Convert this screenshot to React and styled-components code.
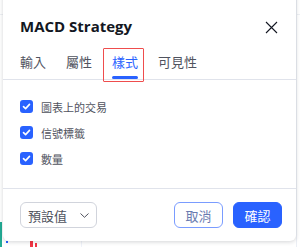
import React from "react";
import styled, { createGlobalStyle } from "styled-components";

const Global = createGlobalStyle`
  html, body { margin: 0; padding: 0; background: #fff; }
  body { font-family: Inter, "Noto Sans CJK TC", "Noto Sans", sans-serif; }
`;

const Stage = styled.div`
  position: relative;
  width: 300px;
  height: 247px;
  overflow: hidden;
  background: #fff;
`;

const Chart = styled.div`
  position: absolute;
  inset: 0;
  background:
    linear-gradient(to right, transparent 81px, #f0f3fa 81px, #f0f3fa 82px, transparent 82px),
    linear-gradient(to right, transparent 296px, #eceff5 296px, #eceff5 297px, transparent 297px),
    linear-gradient(to bottom, transparent 14px, #eef0f4 14px, #eef0f4 15px, transparent 15px);
`;

const Candle = styled.div`
  position: absolute;
  left: ${(p) => p.x}px;
  top: ${(p) => p.y}px;
  width: ${(p) => p.w}px;
  height: ${(p) => p.h}px;
  background: ${(p) => p.c};
`;

const Dialog = styled.div`
  position: absolute;
  left: 3px;
  top: -10px;
  width: 293px;
  height: 251px;
  background: #fff;
  border-radius: 6px;
  box-shadow: 0 1px 4px rgba(19, 23, 34, 0.18);
  display: flex;
  flex-direction: column;
`;

const Header = styled.div`
  display: flex;
  align-items: center;
  justify-content: space-between;
  padding: 25px 18px 0 17px;
  height: 22px;
`;

const Title = styled.div`
  font-family: "Open Sans", sans-serif;
  font-weight: 700;
  font-size: 15px;
  line-height: 22px;
  color: #131722;
`;

const Close = styled.svg`
  width: 13px;
  height: 13px;
  margin-top: 3px;
`;

const Tabs = styled.div`
  display: flex;
  gap: 20px;
  padding: 0 17px;
  height: 42px;
  border-bottom: 1px solid #e0e3eb;
`;

const Tab = styled.div`
  position: relative;
  font-size: 13px;
  line-height: 18px;
  padding-top: 16px;
  color: ${(p) => (p.active ? "#2962ff" : "#50535e")};
  &::after {
    content: "";
    display: ${(p) => (p.active ? "block" : "none")};
    position: absolute;
    left: 0;
    right: 0;
    bottom: 0;
    height: 3px;
    border-radius: 2px;
    background: #2962ff;
  }
`;

const Marker = styled.div`
  position: absolute;
  left: -9px;
  right: -6px;
  top: 11px;
  bottom: -3px;
  border: 1.5px solid #ef4d4d;
  border-radius: 1px;
`;

const Body = styled.div`
  flex: 1;
  display: flex;
  flex-direction: column;
  gap: 13px;
  padding: 20px 17px 0;
  border-bottom: 1px solid #e0e3eb;
`;

const Row = styled.label`
  display: flex;
  align-items: center;
  gap: 8px;
  height: 13px;
  font-size: 11px;
  color: #50535e;
`;

const Box = styled.span`
  width: 13px;
  height: 13px;
  border-radius: 3px;
  background: #2962ff;
  display: flex;
  align-items: center;
  justify-content: center;
`;

const Footer = styled.div`
  display: flex;
  align-items: center;
  padding: 13px 14px 13px 17px;
  gap: 10px;
`;

const Select = styled.div`
  width: 77px;
  height: 26px;
  box-sizing: border-box;
  border: 1px solid #d1d4dc;
  border-radius: 6px;
  display: flex;
  align-items: center;
  justify-content: space-between;
  padding: 0 7px;
  font-size: 13px;
  color: #50535e;
  margin-right: auto;
`;

const Button = styled.div`
  width: 49px;
  height: 26px;
  box-sizing: border-box;
  border-radius: 6px;
  display: flex;
  align-items: center;
  justify-content: center;
  font-size: 13px;
  border: 1px solid ${(p) => (p.primary ? "#2962ff" : "#7a9cff")};
  background: ${(p) => (p.primary ? "#2962ff" : "#fff")};
  color: ${(p) => (p.primary ? "#fff" : "#6a7bb0")};
`;

const Check = () => (
  <svg width="9" height="9" viewBox="0 0 9 9">
    <path d="M1.5 4.6 L3.6 6.6 L7.5 2.4" fill="none" stroke="#fff" strokeWidth="1.6" strokeLinecap="round" strokeLinejoin="round" />
  </svg>
);

const options = ["圖表上的交易", "信號標籤", "數量"];

export default function App() {
  return (
    <Stage>
      <Global />
      <Chart>
        <Candle x={0} y={222} w={2} h={25} c="#22ab94" />
        <Candle x={6} y={241} w={2} h={2} c="#2962ff" />
        <Candle x={30} y={241} w={3} h={6} c="#f23645" />
        <Candle x={35} y={243} w={2} h={4} c="#f23645" />
      </Chart>
      <Dialog>
        <Header>
          <Title>MACD Strategy</Title>
          <Close viewBox="0 0 13 13">
            <path d="M1 1 L12 12 M12 1 L1 12" stroke="#131722" strokeWidth="1.1" fill="none" />
          </Close>
        </Header>
        <Tabs>
          <Tab>輸入</Tab>
          <Tab>屬性</Tab>
          <Tab active>
            樣式
            <Marker />
          </Tab>
          <Tab>可見性</Tab>
        </Tabs>
        <Body>
          {options.map((o) => (
            <Row key={o}>
              <Box>
                <Check />
              </Box>
              {o}
            </Row>
          ))}
        </Body>
        <Footer>
          <Select>
            預設值
            <svg width="9" height="5" viewBox="0 0 9 5">
              <path d="M0.5 0.5 L4.5 4.3 L8.5 0.5" fill="none" stroke="#50535e" strokeWidth="1" />
            </svg>
          </Select>
          <Button>取消</Button>
          <Button primary>確認</Button>
        </Footer>
      </Dialog>
    </Stage>
  );
}
